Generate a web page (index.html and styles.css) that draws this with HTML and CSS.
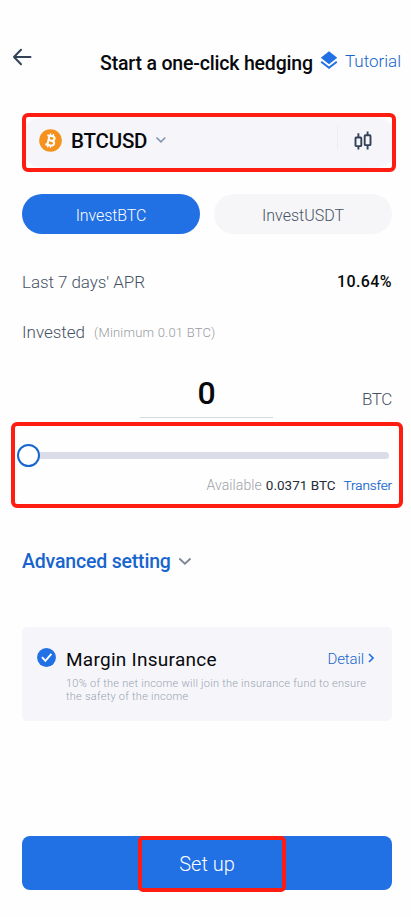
FILE: index.html
```html
<!DOCTYPE html>
<html lang="en">
<head>
<meta charset="utf-8">
<meta name="viewport" content="width=device-width, initial-scale=1">
<title>One-click hedging</title>
<link rel="stylesheet" href="styles.css">
</head>
<body>
<main class="screen">
  <header class="header">
    <svg class="back" width="20" height="18" viewBox="0 0 20 18"><path d="M9 1.8 2 9l7 7.2M2 9h16.5" fill="none" stroke="#344257" stroke-width="2" stroke-linecap="round" stroke-linejoin="round"/></svg>
    <h1 class="title">Start a one-click hedging</h1>
    <svg class="layers" width="18" height="20" viewBox="0 0 18 20"><path d="M9 1.2 17.2 7.8 9 14.2.8 7.8Z" fill="#2170e4"/><path d="m1.2 11.7 7.8 6 7.8-6" fill="none" stroke="#2170e4" stroke-width="2"/></svg>
    <a class="tutorial">Tutorial</a>
  </header>

  <section class="pair">
    <svg class="coin" width="23" height="23" viewBox="0 0 23 23"><circle cx="11.5" cy="11.5" r="11.3" fill="#f4921d"/><g transform="rotate(13 11.5 11.5)" fill="none" stroke="#fff" stroke-width="2"><path d="M7.3 7h5.1c3.6 0 3.6 4.4 0 4.4H9.5h3.2c4 0 4 4.9 0 4.9H7.3M9.4 7v9.3"/><path d="M10.2 4.5v2.3M13 4.5v2.3M10.2 16.4v2.4M13 16.4v2.4" stroke-width="1.4"/></g></svg>
    <span class="pair-name">BTCUSD</span>
    <svg class="pair-chevron" width="12" height="8" viewBox="0 0 12 8"><path d="m1.5 1.5 4.4 4.4 4.4-4.4" fill="none" stroke="#8395ad" stroke-width="1.6"/></svg>
    <i class="divider"></i>
    <svg class="candles" width="18" height="20" viewBox="0 0 18 20"><g fill="none" stroke="#344257" stroke-width="1.9"><rect x="1.5" y="6.5" width="5.8" height="8.6" rx=".7"/><rect x="10.7" y="4.3" width="5.8" height="9.8" rx=".7"/><path d="M4.4 2.2v4.3M4.4 15v3.5M13.6.5v3.8M13.6 14v4.5"/></g></svg>
  </section>

  <nav class="tabs">
    <button class="tab active"><span>InvestBTC</span></button>
    <button class="tab"><span>InvestUSDT</span></button>
  </nav>

  <section class="row apr"><span class="label apr-label">Last 7 days' APR</span><strong class="apr-value">10.64%</strong></section>
  <section class="row invested"><span class="label invested-label">Invested</span><span class="minimum">(Minimum 0.01 BTC)</span></section>
  <section class="amount"><span class="value">0</span><span class="unit">BTC</span></section>

  <section class="slider-box">
    <div class="slider"><i class="thumb"></i><i class="track"></i></div>
    <div class="balance"><span class="available">Available</span><span class="funds">0.0371 BTC</span><a class="transfer">Transfer</a></div>
  </section>

  <section class="advanced"><span class="advanced-label">Advanced setting</span><svg width="14" height="9" viewBox="0 0 14 9"><path d="m1.3 1.5 5.6 5.2 5.6-5.2" fill="none" stroke="#7d8794" stroke-width="1.8"/></svg></section>

  <section class="insurance">
    <svg class="check" width="19" height="19" viewBox="0 0 19 19"><circle cx="9.5" cy="9.5" r="9.4" fill="#2170e4"/><path d="m5 9.2 3.4 3.7 6-7" fill="none" stroke="#fff" stroke-width="1.9"/></svg>
    <div class="insurance-body">
      <div class="insurance-head"><h2 class="insurance-title">Margin Insurance</h2><a class="detail">Detail</a><svg class="detail-arrow" width="7" height="10" viewBox="0 0 7 10"><path d="m1 1 4 4-4 4" fill="none" stroke="#2170e4" stroke-width="1.7"/></svg></div>
      <p class="note"><span class="note-a">10% of the net income will join the insurance fund to ensure</span><br><span class="note-b">the safety of the income</span></p>
    </div>
  </section>

  <button class="setup"><span class="setup-frame"><span class="setup-text">Set up</span></span></button>
</main>
</body>
</html>
```
FILE: styles.css
```css
* { box-sizing: border-box; }
body { margin: 0; background: #fefefe; font-family: Roboto, sans-serif; color: #07090d; }
.screen { width: 411px; height: 917px; display: flex; flex-direction: column; overflow: hidden; white-space: nowrap; }
h1, h2, p { margin: 0; }
button { border: 0; padding: 0; font-family: inherit; }
svg { display: block; flex: none; }

.header { height: 113px; padding: 48px 0 0 12px; display: flex; align-items: flex-start; }
.title { width: 220px; margin: 4px 0 0 68px; font-size: 19.5px; line-height: 24px; font-weight: 500; letter-spacing: -.18px; }
.layers { margin-top: 2px; }
.tutorial { margin: 1px 0 0 7px; font-size: 17px; line-height: 24px; font-weight: 300; color: #1765cd; }

.pair { height: 59px; margin: 0 15px 0 22px; padding: 0 20px 0 13px; border: 4px solid #ff1d12; border-radius: 6px; background: radial-gradient(circle at 18px 50%, #f6f6fa 24px, transparent 27px) left / 20px 100% no-repeat, radial-gradient(circle at 2px 50%, #f6f6fa 24px, transparent 27px) right / 20px 100% no-repeat, linear-gradient(#f6f6fa, #f6f6fa) center / calc(100% - 38px) 100% no-repeat; display: flex; align-items: center; }
.coin { margin-top: -5px; }
.pair-name { margin: -3px 0 0 9px; font-size: 20.5px; font-weight: 500; letter-spacing: -.2px; }
.pair-chevron { margin: -5px 0 0 8px; }
.divider { width: 1px; height: 24px; margin: -9px 16px 0 auto; background: #ededf4; }
.candles { margin-top: -3px; }

.tabs { height: 40px; margin: 22px 19px 0 22px; display: grid; grid-template-columns: 178px 178px; gap: 14px; }
.tab { border-radius: 20px; background: #f6f6f9; color: #465264; font-size: 16px; font-weight: 300; padding-top: 2px; }
.tab.active { background: #2170e4; color: #fff; letter-spacing: -.1px; }

.row { height: 50px; margin: 0 19px 0 22px; display: flex; align-items: center; }
.apr { margin-top: 23px; }
.label { font-size: 17px; font-weight: 300; color: #465264; }
.apr-label { letter-spacing: -.06px; }
.apr-value { margin: -1px 0 0 auto; font-size: 16px; font-weight: 500; letter-spacing: .4px; }
.minimum { margin-left: 9px; font-size: 13px; font-weight: 300; color: #989ca3; letter-spacing: .21px; }

.amount { height: 61px; margin: 0 19px 0 140px; display: flex; align-items: flex-start; justify-content: space-between; }
.value { width: 133px; height: 61px; padding-top: 17px; border-bottom: 1px solid #d8d9dc; text-align: center; font-size: 32px; line-height: 38px; font-weight: 500; }
.unit { margin-top: 32px; font-size: 17px; line-height: 20px; font-weight: 300; color: #465264; letter-spacing: -.4px; }

.slider-box { height: 86px; margin: 4px 8px 0 11px; padding: 18px 7px 0 2px; border: 4px solid #ff1d12; border-radius: 6px; }
.slider { height: 23px; display: flex; align-items: center; }
.thumb { width: 23px; height: 23px; border: 2px solid #1765cd; border-radius: 50%; background: #fff; }
.track { width: 349px; height: 7px; border-radius: 0 4px 4px 0; background: #dadde8; }
.balance { height: 20px; margin-top: 9px; display: flex; justify-content: flex-end; align-items: baseline; font-size: 14px; line-height: 18px; }
.available { color: #9da1a7; font-weight: 300; margin-right: 4px; letter-spacing: .1px; }
.funds { color: #252c36; margin-right: 8px; font-size: 13.5px; }
.transfer { color: #1765cd; font-size: 13.5px; font-weight: 300; -webkit-text-stroke: .2px #1765cd; letter-spacing: -.1px; }

.advanced { height: 30px; margin: 38px 0 0 22px; display: flex; align-items: center; gap: 7px; color: #1765cd; font-size: 19.5px; font-weight: 500; letter-spacing: -.18px; }

.insurance { height: 94px; margin: 51px 19px 0 22px; padding: 21px 17px 0 15px; border-radius: 5px; background: #f6f6fa; display: flex; align-items: flex-start; }
.insurance-body { flex: 1; margin-left: 10px; min-width: 0; }
.insurance-head { height: 22px; display: flex; align-items: center; }
.insurance-title { font-size: 19px; font-weight: 400; letter-spacing: .27px; }
.detail { margin-left: auto; font-size: 15px; font-weight: 300; color: #1765cd; letter-spacing: -.1px; }
.detail-arrow { margin: -3px 0 0 4px; }
.note { margin-top: 7px; font-size: 11px; line-height: 13px; font-weight: 300; color: #98a3b2; letter-spacing: .25px; }

.setup { height: 54px; margin: 115px 19px 0 22px; border-radius: 8px; background: #2170e4; color: #fff; display: flex; align-items: flex-start; padding-left: 116px; }
.setup-frame { flex: none; width: 148px; height: 56px; border: 4px solid #ff1d12; border-radius: 5px; display: flex; align-items: center; justify-content: center; padding-right: 10px; }
.setup-text { font-size: 20px; font-weight: 300; }
```
